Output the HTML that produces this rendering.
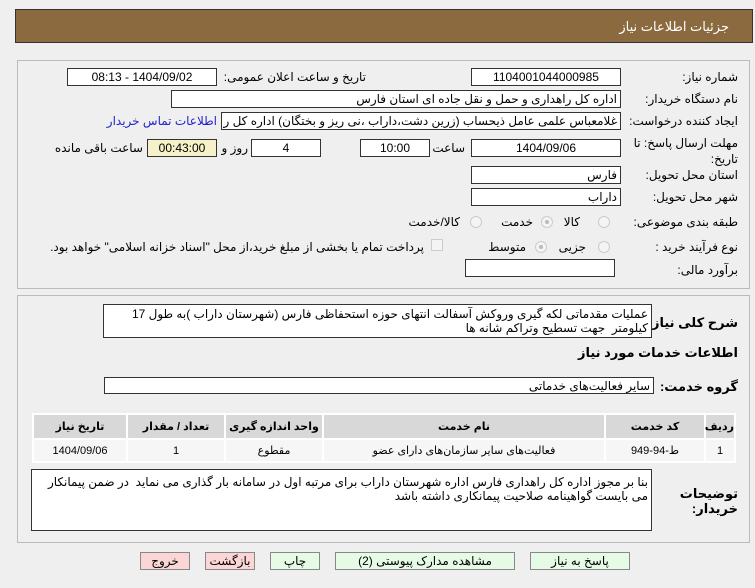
<!DOCTYPE html>
<html><head><meta charset="utf-8"><style>
body{margin:0;width:755px;height:588px;background:#efefef;font-family:"Liberation Sans","DejaVu Sans",sans-serif;font-size:12px;color:#000;position:relative;overflow:hidden}
.a{position:absolute;white-space:nowrap}
.l{position:absolute;white-space:nowrap;direction:rtl;text-align:right}
.b{position:absolute;background:#fff;border:1px solid #333;box-sizing:border-box;direction:rtl;text-align:right;padding:0 3px;line-height:16px;white-space:nowrap;overflow:hidden}
.c{text-align:center}
.r{position:absolute;width:12px;height:12px;border-radius:50%;border:1px solid #ccc;background:#f4f4f4;box-sizing:border-box}
.r.on::after{content:"";position:absolute;left:3px;top:3px;width:4px;height:4px;border-radius:50%;background:#bbb}
.btn{position:absolute;top:552px;height:18px;border:1px solid #888;box-sizing:border-box;text-align:center;line-height:16px;direction:rtl}
table{position:absolute;left:32px;top:413px;width:704px;border-collapse:separate;border-spacing:2px;background:#fff;font-size:11px;table-layout:fixed}
th{background:#d8d8d8;height:23px;font-weight:bold;white-space:nowrap;padding:0}
td{background:#f6f6f6;height:21px;text-align:center;white-space:nowrap;padding:0}
</style></head><body>
<div class="a" style="left:15px;top:9px;width:738px;height:34px;background:#8a6a3e;border:1px solid #333;box-sizing:border-box"></div>
<div class="l" style="right:26px;top:19px;color:#fff;font-size:13px">جزئیات اطلاعات نیاز</div>

<div class="a" style="left:17px;top:60px;width:733px;height:229px;border:1px solid #bbb;box-sizing:border-box"></div>

<div class="l" style="right:17px;top:70px">شماره نیاز:</div>
<div class="b c" style="left:471px;top:68px;width:150px;height:18px">1104001044000985</div>
<div class="l" style="right:389px;top:70px">تاریخ و ساعت اعلان عمومی:</div>
<div class="b c" style="left:67px;top:68px;width:150px;height:18px">1404/09/02 - 08:13</div>

<div class="l" style="right:17px;top:92px">نام دستگاه خریدار:</div>
<div class="b" style="left:171px;top:90px;width:450px;height:18px">اداره کل راهداری و حمل و نقل جاده ای استان فارس</div>

<div class="l" style="right:17px;top:114px">ایجاد کننده درخواست:</div>
<div class="b" style="left:221px;top:112px;width:400px;height:18px">غلامعباس علمی عامل ذیحساب (زرین دشت،داراب ،نی ریز و بختگان) اداره کل ر</div>
<div class="l" style="right:538px;top:114px;color:#22c">اطلاعات تماس خریدار</div>

<div class="l" style="right:17px;top:136px">مهلت ارسال پاسخ: تا</div>
<div class="l" style="right:17px;top:152px">تاریخ:</div>
<div class="b c" style="left:471px;top:139px;width:150px;height:18px">1404/09/06</div>
<div class="l" style="right:290px;top:141px">ساعت</div>
<div class="b c" style="left:360px;top:139px;width:70px;height:18px">10:00</div>
<div class="b c" style="left:251px;top:139px;width:70px;height:18px">4</div>
<div class="l" style="right:507px;top:141px">روز و</div>
<div class="b c" style="left:147px;top:139px;width:70px;height:18px;background:#f5f2c9">00:43:00</div>
<div class="l" style="right:612px;top:141px">ساعت باقی مانده</div>

<div class="l" style="right:17px;top:168px">استان محل تحویل:</div>
<div class="b" style="left:471px;top:166px;width:150px;height:18px">فارس</div>
<div class="l" style="right:17px;top:190px">شهر محل تحویل:</div>
<div class="b" style="left:471px;top:188px;width:150px;height:18px">داراب</div>

<div class="l" style="right:17px;top:215px">طبقه بندی موضوعی:</div>
<div class="r" style="left:598px;top:216px"></div><div class="l" style="right:175px;top:215px">کالا</div>
<div class="r on" style="left:541px;top:216px"></div><div class="l" style="right:222px;top:215px">خدمت</div>
<div class="r" style="left:470px;top:216px"></div><div class="l" style="right:295px;top:215px">کالا/خدمت</div>

<div class="l" style="right:17px;top:240px">نوع فرآیند خرید :</div>
<div class="r" style="left:598px;top:241px"></div><div class="l" style="right:169px;top:240px">جزیی</div>
<div class="r on" style="left:535px;top:241px"></div><div class="l" style="right:229px;top:240px">متوسط</div>
<div class="a" style="left:431px;top:239px;width:12px;height:12px;border:1px solid #ccc;background:#f4f4f4;box-sizing:border-box"></div>
<div class="l" style="right:331px;top:240px">پرداخت تمام یا بخشی از مبلغ خرید،از محل "اسناد خزانه اسلامی" خواهد بود.</div>

<div class="l" style="right:17px;top:263px">برآورد مالی:</div>
<div class="b" style="left:465px;top:259px;width:150px;height:18px"></div>

<div class="a" style="left:17px;top:295px;width:733px;height:248px;border:1px solid #bbb;box-sizing:border-box"></div>
<div class="l" style="right:17px;top:315px;font-weight:bold;font-size:13px">شرح کلی نیاز:</div>
<div class="b" style="left:103px;top:304px;width:549px;height:34px;white-space:normal;line-height:14px;padding-top:2px">عملیات مقدماتی لکه گیری وروکش آسفالت انتهای حوزه استحفاظی فارس (شهرستان داراب )به طول 17 کیلومتر&nbsp; جهت تسطیح وتراکم شانه ها</div>
<div class="l" style="right:17px;top:345px;font-weight:bold;font-size:13px">اطلاعات خدمات مورد نیاز</div>
<div class="l" style="right:17px;top:379px;font-weight:bold;font-size:13px">گروه خدمت:</div>
<div class="b" style="left:104px;top:377px;width:550px;height:17px">سایر فعالیت‌های خدماتی</div>

<table dir="rtl"><tr><th style="width:28px">ردیف</th><th style="width:98px">کد خدمت</th><th style="width:280px">نام خدمت</th><th style="width:96px">واحد اندازه گیری</th><th style="width:96px">تعداد / مقدار</th><th>تاریخ نیاز</th></tr>
<tr><td>1</td><td>ط-94-949</td><td>فعالیت‌های سایر سازمان‌های دارای عضو</td><td>مقطوع</td><td>1</td><td>1404/09/06</td></tr></table>

<div class="l" style="right:17px;top:486px;font-weight:bold;font-size:13px;line-height:15px;text-align:right">توضیحات<br>خریدار:</div>
<div class="b" style="left:31px;top:469px;width:621px;height:62px;white-space:normal;line-height:14px;padding-top:5px">بنا بر مجوز اداره کل راهداری فارس اداره شهرستان داراب برای مرتبه اول در سامانه بار گذاری می نماید&nbsp; در ضمن پیمانکار می بایست گواهینامه صلاحیت پیمانکاری داشته باشد</div>

<div class="btn" style="left:140px;width:50px;background:#fcd6d6">خروج</div>
<div class="btn" style="left:205px;width:50px;background:#fcd6d6">بازگشت</div>
<div class="btn" style="left:270px;width:50px;background:#e6fbe6">چاپ</div>
<div class="btn" style="left:335px;width:180px;background:#e6fbe6">مشاهده مدارک پیوستی (2)</div>
<div class="btn" style="left:530px;width:100px;background:#e6fbe6">پاسخ به نیاز</div>
</body></html>
